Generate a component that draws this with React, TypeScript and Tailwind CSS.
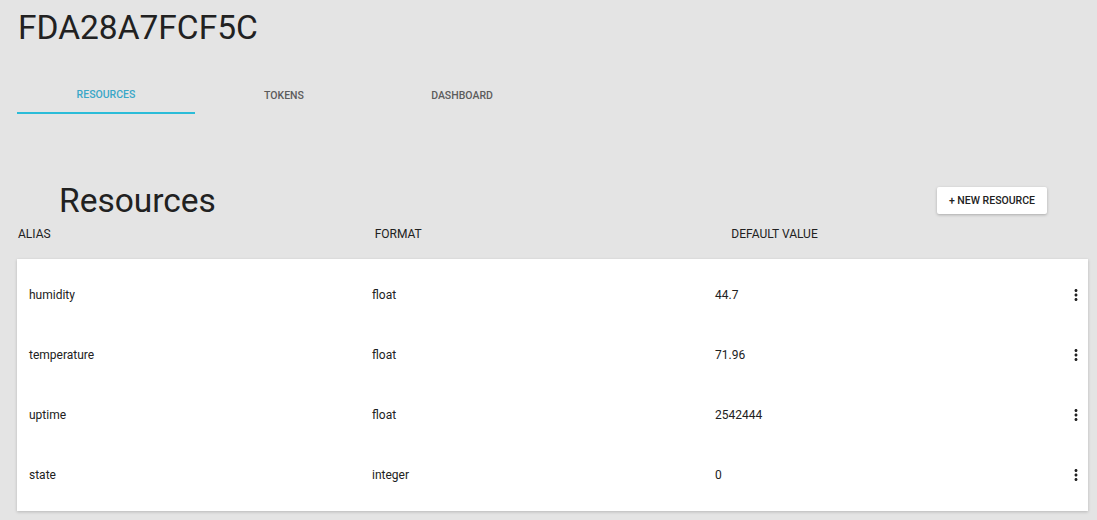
const rows = [
  { alias: "humidity", format: "float", value: "44.7" },
  { alias: "temperature", format: "float", value: "71.96" },
  { alias: "uptime", format: "float", value: "2542444" },
  { alias: "state", format: "integer", value: "0" },
]

const tabs = ["RESOURCES", "TOKENS", "DASHBOARD"]

const MoreVert = () => (
  <svg width="18" height="18" viewBox="0 0 24 24" fill="#212121">
    <path d="M12 8c1.1 0 2-.9 2-2s-.9-2-2-2-2 .9-2 2 .9 2 2 2zm0 2c-1.1 0-2 .9-2 2s.9 2 2 2 2-.9 2-2-.9-2-2-2zm0 6c-1.1 0-2 .9-2 2s.9 2 2 2 2-.9 2-2-.9-2-2-2z" />
  </svg>
)

export default function App() {
  return (
    <div className="min-h-[520px] w-full bg-[#e4e4e4] font-['Roboto',sans-serif] text-[#212121]">
      <div className="pl-[17px] pr-[9px] pt-[8px]">
        <h1 className="pl-[1px] text-[33.5px] leading-[40px] font-normal">FDA28A7FCF5C</h1>

        {/* tabs */}
        <div className="mt-[28px] flex">
          {tabs.map((t, i) => (
            <div
              key={t}
              className={
                i === 0
                  ? "flex h-[38px] w-[178px] items-center justify-center border-b-2 border-[#2bbcd8] pt-[2px] text-[10.5px] font-medium text-[#3aa7c8]"
                  : "flex h-[38px] w-[178px] items-center justify-center pt-[2px] text-[10.5px] font-medium text-[#5c5c5c]"
              }
            >
              {t}
            </div>
          ))}
        </div>

        <div className="mt-[67px] mb-[5px] flex items-start justify-between">
          <h2 className="pl-[42px] text-[33.5px] leading-[40px] font-normal">Resources</h2>
          <button className="mr-[41px] mt-[6px] h-[27px] rounded-[2px] bg-white px-[12px] text-[10.5px] font-medium shadow-[0_1px_3px_rgba(0,0,0,0.25)]">
            + NEW RESOURCE
          </button>
        </div>

        <div className="grid grid-cols-3 pl-[1px] text-[12px] leading-[16px]">
          <div>ALIAS</div>
          <div>FORMAT</div>
          <div>DEFAULT VALUE</div>
        </div>

        <div className="mt-[17px] bg-white py-[6px] shadow-[0_1px_3px_rgba(0,0,0,0.2)]">
          {rows.map((r) => (
            <div
              key={r.alias}
              className="grid h-[60px] grid-cols-[343px_343px_1fr_auto] items-center pl-[12px] pr-[3px] text-[12px]"
            >
              <div>{r.alias}</div>
              <div>{r.format}</div>
              <div>{r.value}</div>
              <MoreVert />
            </div>
          ))}
        </div>
      </div>
    </div>
  )
}
